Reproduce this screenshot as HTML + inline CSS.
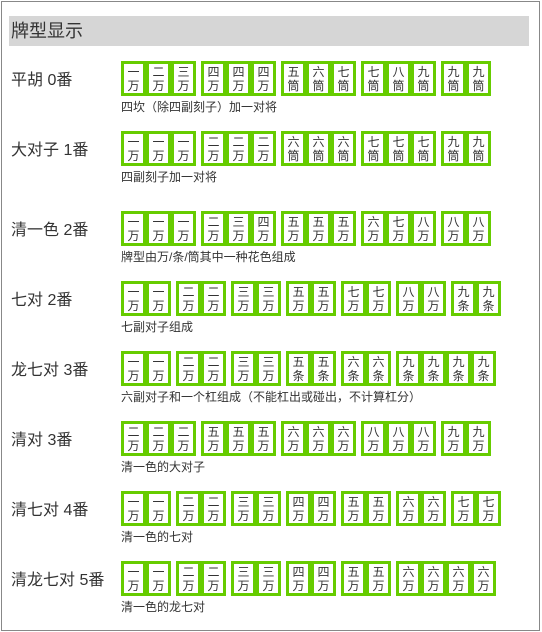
<!DOCTYPE html>
<html><head><meta charset="utf-8"><style>
*{margin:0;padding:0;box-sizing:border-box}
body{width:542px;height:632px;background:#fff;font-family:"Liberation Sans","Noto Sans CJK SC",sans-serif;color:#333;position:relative;overflow:hidden}
.frame{position:absolute;left:1px;top:1px;width:539px;height:630px;border:1px solid #888}
.hdr{position:absolute;left:9px;top:16px;width:520px;height:30px;background:#d6d6d6;font-size:18px;line-height:30px;padding-left:2px;color:#333}
.row{position:absolute;left:0;width:542px}
.lab{position:absolute;left:11px;top:10px;font-size:16px;line-height:20px;color:#333}
.tiles{position:absolute;left:121px;top:0;white-space:nowrap;display:flex}
.g{display:flex;margin-right:5px}
.t{width:25px;height:35px;border:3px solid #66cc00;background:#fff;font-size:12px;line-height:14px;text-align:center;padding-top:1px;color:#333}
.d{position:absolute;left:121px;top:39px;font-size:12px;line-height:14px;color:#333;white-space:nowrap}
</style></head><body>
<div class="frame"></div>
<div class="hdr">牌型显示</div>
<div id="rows"></div>
<script>
var R=[
[61,"平胡 0番",[["一二三","万"],["四四四","万"],["五六七","筒"],["七八九","筒"],["九九","筒"]],"四坎（除四副刻子）加一对将"],
[131,"大对子 1番",[["一一一","万"],["二二二","万"],["六六六","筒"],["七七七","筒"],["九九","筒"]],"四副刻子加一对将"],
[211,"清一色 2番",[["一一一","万"],["二三四","万"],["五五五","万"],["六七八","万"],["八八","万"]],"牌型由万/条/筒其中一种花色组成"],
[281,"七对 2番",[["一一","万"],["二二","万"],["三三","万"],["五五","万"],["七七","万"],["八八","万"],["九九","条"]],"七副对子组成"],
[351,"龙七对 3番",[["一一","万"],["二二","万"],["三三","万"],["五五","条"],["六六","条"],["九九九九","条"]],"六副对子和一个杠组成（不能杠出或碰出，不计算杠分）"],
[421,"清对 3番",[["二二二","万"],["五五五","万"],["六六六","万"],["八八八","万"],["九九","万"]],"清一色的大对子"],
[491,"清七对 4番",[["一一","万"],["二二","万"],["三三","万"],["四四","万"],["五五","万"],["六六","万"],["七七","万"]],"清一色的七对"],
[561,"清龙七对 5番",[["一一","万"],["二二","万"],["三三","万"],["四四","万"],["五五","万"],["六六六六","万"]],"清一色的龙七对"]
];
var h="";
R.forEach(function(r){
h+='<div class="row" style="top:'+r[0]+'px"><div class="lab">'+r[1]+'</div><div class="tiles">';
r[2].forEach(function(g){h+='<div class="g">';for(var i=0;i<g[0].length;i++)h+='<div class="t">'+g[0][i]+'<br>'+g[1]+'</div>';h+='</div>';});
h+='</div><div class="d">'+r[3]+'</div></div>';
});
document.getElementById("rows").innerHTML=h;
</script>
</body></html>
